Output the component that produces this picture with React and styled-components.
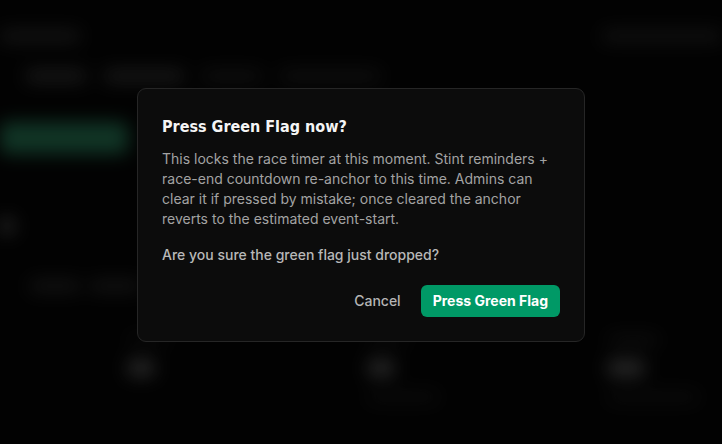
import React from 'react';
import styled, { createGlobalStyle } from 'styled-components';

const GlobalStyle = createGlobalStyle`
  html, body {
    margin: 0;
    padding: 0;
    background: #040404;
    font-family: Inter, "Noto Sans", sans-serif;
    -webkit-font-smoothing: antialiased;
  }
`;

const Screen = styled.div`
  position: relative;
  width: 722px;
  height: 444px;
  overflow: hidden;
  background: #040404;
`;

const Page = styled.div`
  display: flex;
  flex-direction: column;
  padding: 24px 0 0 0;
  filter: blur(9px);
  opacity: 0.65;
`;

const TopBar = styled.div`
  display: flex;
  justify-content: space-between;
  align-items: center;
  height: 24px;
`;

const Blob = styled.div`
  width: ${(p) => p.$w}px;
  height: ${(p) => p.$h || 12}px;
  border-radius: 4px;
  background: ${(p) => p.$c || '#3a3a3a'};
`;

const Line = styled.div`
  display: flex;
  align-items: center;
  gap: ${(p) => p.$gap || 12}px;
  margin-top: ${(p) => p.$mt || 0}px;
  padding-left: ${(p) => p.$pl || 0}px;
`;

const GreenBar = styled.div`
  width: 128px;
  height: 32px;
  margin-top: 40px;
  border-radius: 6px;
  background: #247352;
`;

const Cards = styled.div`
  display: grid;
  grid-template-columns: repeat(3, 240px);
  padding: 0 0 0 120px;
  margin-top: 32px;
`;

const Card = styled.div`
  display: flex;
  flex-direction: column;
  gap: 16px;
  padding: 12px 8px;
`;

const Overlay = styled.div`
  position: absolute;
  inset: 0;
  background: rgba(0, 0, 0, 0.3);
  display: flex;
  align-items: center;
  justify-content: center;
`;

const Dialog = styled.div`
  box-sizing: border-box;
  width: 448px;
  margin-top: -15px;
  padding: 24px;
  background: #0c0c0c;
  border: 1px solid #262626;
  border-radius: 9px;
  display: flex;
  flex-direction: column;
`;

const Title = styled.h2`
  margin: 0;
  font-family: "DejaVu Sans Condensed", "DejaVu Sans", sans-serif;
  font-stretch: condensed;
  font-size: 16px;
  line-height: 28px;
  font-weight: 700;
  color: #f5f5f5;
`;

const Text = styled.p`
  margin: ${(p) => p.$mt || 0}px 0 0 0;
  font-size: 14px;
  line-height: 20px;
  font-weight: ${(p) => (p.$strong ? 500 : 400)};
  color: ${(p) => (p.$strong ? '#b8b8b8' : '#a3a3a3')};
`;

const Actions = styled.div`
  display: flex;
  justify-content: flex-end;
  gap: 8px;
  margin-top: 20px;
`;

const Button = styled.button`
  height: 32px;
  padding: 0 12px;
  border: none;
  border-radius: 6px;
  font-family: Inter, sans-serif;
  font-size: 14px;
  font-weight: ${(p) => (p.$primary ? 700 : 500)};
  color: ${(p) => (p.$primary ? '#ffffff' : '#b5b5b5')};
  background: ${(p) => (p.$primary ? '#009966' : 'transparent')};
  cursor: pointer;
`;

const App = () => (
  <Screen>
    <GlobalStyle />
    <Page>
      <TopBar>
        <Blob $w={80} $h={12} $c="#2e2e2e" />
        <Blob $w={120} $h={12} $c="#262626" />
      </TopBar>
      <Line $mt={22} $pl={26} $gap={18}>
        <Blob $w={60} $c="#3a3a3a" />
        <Blob $w={80} $c="#3a3a3a" />
        <Blob $w={60} $c="#222" />
        <Blob $w={100} $c="#222" />
      </Line>
      <GreenBar />
      <Line $mt={64}>
        <Blob $w={14} $h={16} $c="#555" />
      </Line>
      <Line $mt={46} $pl={30} $gap={10}>
        <Blob $w={50} $c="#2a2a2a" />
        <Blob $w={50} $c="#2a2a2a" />
      </Line>
      <Cards>
        <Card>
          <Blob $w={40} $h={8} $c="#1a1a1a" />
          <Blob $w={26} $h={16} $c="#5a5a5a" />
        </Card>
        <Card>
          <Blob $w={40} $h={8} $c="#1a1a1a" />
          <Blob $w={26} $h={16} $c="#5a5a5a" />
          <Blob $w={70} $h={10} $c="#1a1a1a" />
        </Card>
        <Card>
          <Blob $w={50} $h={8} $c="#262626" />
          <Blob $w={36} $h={16} $c="#5a5a5a" />
          <Blob $w={90} $h={10} $c="#1a1a1a" />
        </Card>
      </Cards>
    </Page>
    <Overlay>
      <Dialog>
        <Title>Press Green Flag now?</Title>
        <Text $mt={8}>
          This locks the race timer at this moment. Stint reminders +
          race-end countdown re-anchor to this time. Admins can clear it if
          pressed by mistake; once cleared the anchor reverts to the
          estimated event-start.
        </Text>
        <Text $mt={16} $strong>
          Are you sure the green flag just dropped?
        </Text>
        <Actions>
          <Button>Cancel</Button>
          <Button $primary>Press Green Flag</Button>
        </Actions>
      </Dialog>
    </Overlay>
  </Screen>
);

export default App;
